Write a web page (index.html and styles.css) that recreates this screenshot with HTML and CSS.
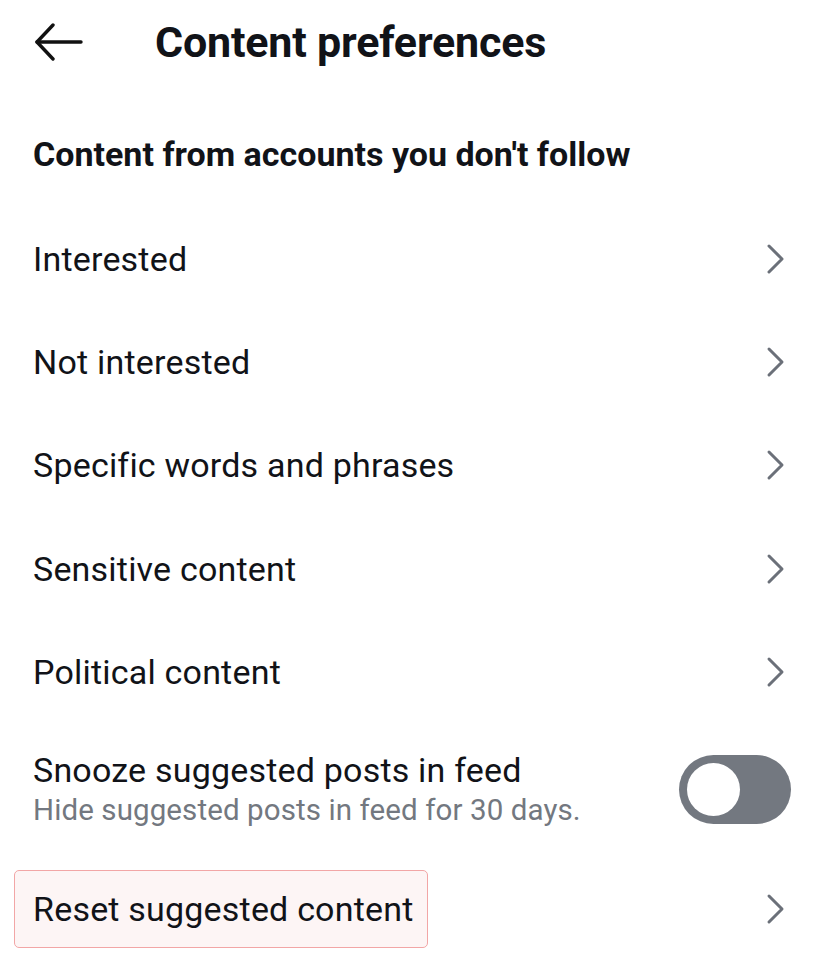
FILE: index.html
```html
<!DOCTYPE html>
<html lang="en">
<head>
  <meta charset="UTF-8">
  <meta name="viewport" content="width=device-width, initial-scale=1.0">
  <title>Content preferences</title>
  <link rel="stylesheet" href="styles.css">
</head>
<body>
  <div class="page">
    <div class="topbar">
      <a class="back" href="#">
        <svg width="50" height="38" viewBox="0 0 50 38" fill="none" stroke="#111" stroke-width="3.4" stroke-linecap="round" stroke-linejoin="round">
          <path d="M47 19H3"/>
          <path d="M19 2L3 19L19 36"/>
        </svg>
      </a>
      <h1>Content preferences</h1>
    </div>

    <h2 class="section">Content from accounts you don't follow</h2>

    <div class="row">
      <span class="label">Interested</span>
      <svg class="chev" width="20" height="32" viewBox="0 0 20 32"><path d="M3 3L16 16L3 29"/></svg>
    </div>
    <div class="row">
      <span class="label">Not interested</span>
      <svg class="chev" width="20" height="32" viewBox="0 0 20 32"><path d="M3 3L16 16L3 29"/></svg>
    </div>
    <div class="row">
      <span class="label">Specific words and phrases</span>
      <svg class="chev" width="20" height="32" viewBox="0 0 20 32"><path d="M3 3L16 16L3 29"/></svg>
    </div>
    <div class="row">
      <span class="label">Sensitive content</span>
      <svg class="chev" width="20" height="32" viewBox="0 0 20 32"><path d="M3 3L16 16L3 29"/></svg>
    </div>
    <div class="row">
      <span class="label">Political content</span>
      <svg class="chev" width="20" height="32" viewBox="0 0 20 32"><path d="M3 3L16 16L3 29"/></svg>
    </div>

    <div class="row snooze">
      <div class="text">
        <span class="label">Snooze suggested posts in feed</span>
        <span class="sub">Hide suggested posts in feed for 30 days.</span>
      </div>
      <span class="toggle"><span class="knob"></span></span>
    </div>

    <div class="row reset">
      <span class="label highlight">Reset suggested content</span>
      <svg class="chev" width="20" height="32" viewBox="0 0 20 32"><path d="M3 3L16 16L3 29"/></svg>
    </div>
  </div>
</body>
</html>
```

FILE: styles.css
```css
body {
  margin: 0;
  background: #fff;
  font-family: Roboto, "Noto Sans", sans-serif;
  color: #111318;
}

.page {
  width: 822px;
}

.topbar {
  height: 84px;
  display: flex;
  align-items: center;
  padding-left: 34px;
}

.back {
  display: flex;
  width: 50px;
  height: 38px;
}

.topbar h1 {
  margin: 0 0 0 71px;
  font-size: 43px;
  font-weight: 700;
  letter-spacing: -0.2px;
}

.section {
  margin: 0;
  height: 123px;
  box-sizing: border-box;
  display: flex;
  align-items: center;
  padding: 17px 0 0 33px;
  font-size: 34px;
  font-weight: 700;
}

.row {
  height: 103.4px;
  display: flex;
  align-items: center;
  justify-content: space-between;
  padding: 0 36px 0 33px;
}

.label {
  font-size: 34px;
  letter-spacing: 0.2px;
}

.chev {
  fill: none;
  stroke: #6b7079;
  stroke-width: 3;
  stroke-linecap: round;
  stroke-linejoin: round;
}

.snooze {
  height: 132px;
  margin-top: -1px;
  padding-right: 31px;
}

.snooze .text {
  display: flex;
  flex-direction: column;
}

.sub {
  font-size: 29.5px;
  color: #737880;
  letter-spacing: 0.1px;
  margin-top: 3px;
}

.toggle {
  width: 112px;
  height: 69px;
  border-radius: 35px;
  background: #737880;
  display: flex;
  align-items: center;
  padding-left: 8px;
  box-sizing: border-box;
  margin-top: 1px;
}

.knob {
  width: 53px;
  height: 53px;
  border-radius: 50%;
  background: #fff;
}

.reset {
  height: 78px;
  margin-top: 15px;
  padding-left: 14px;
}

.highlight {
  height: 78px;
  box-sizing: border-box;
  display: flex;
  align-items: center;
  padding: 0 13px 0 18px;
  border: 1.5px solid #f2a6a6;
  border-radius: 5px;
  background: #fdf5f5;
}
```
